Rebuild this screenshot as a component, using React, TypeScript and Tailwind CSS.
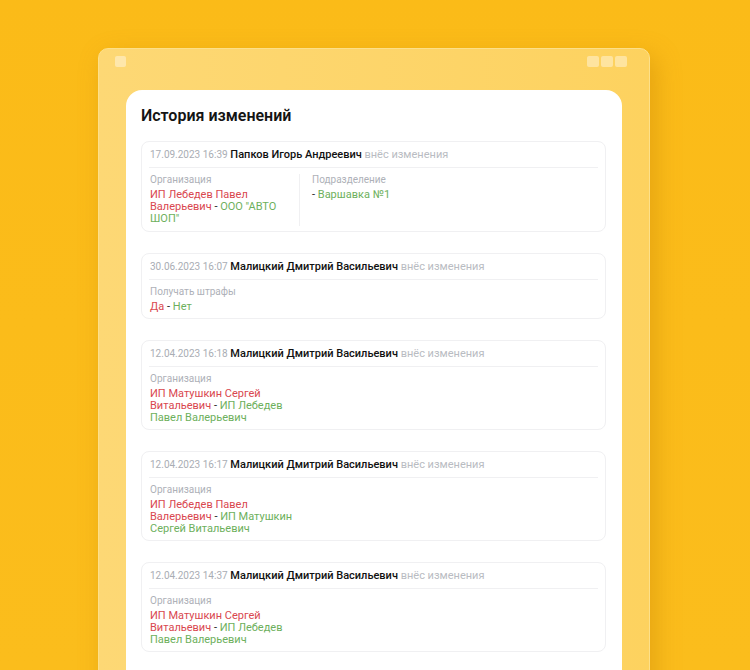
type Change = {
  label: string;
  from: string;
  to: string;
};

type Entry = {
  date: string;
  author: string;
  changes: Change[];
};

const entries: Entry[] = [
  {
    date: "17.09.2023 16:39",
    author: "Папков Игорь Андреевич",
    changes: [
      { label: "Организация", from: "ИП Лебедев Павел Валерьевич", to: 'ООО "АВТО ШОП"' },
      { label: "Подразделение", from: "", to: "Варшавка №1" },
    ],
  },
  {
    date: "30.06.2023 16:07",
    author: "Малицкий Дмитрий Васильевич",
    changes: [{ label: "Получать штрафы", from: "Да", to: "Нет" }],
  },
  {
    date: "12.04.2023 16:18",
    author: "Малицкий Дмитрий Васильевич",
    changes: [
      { label: "Организация", from: "ИП Матушкин Сергей Витальевич", to: "ИП Лебедев Павел Валерьевич" },
    ],
  },
  {
    date: "12.04.2023 16:17",
    author: "Малицкий Дмитрий Васильевич",
    changes: [
      { label: "Организация", from: "ИП Лебедев Павел Валерьевич", to: "ИП Матушкин Сергей Витальевич" },
    ],
  },
  {
    date: "12.04.2023 14:37",
    author: "Малицкий Дмитрий Васильевич",
    changes: [
      { label: "Организация", from: "ИП Матушкин Сергей Витальевич", to: "ИП Лебедев Павел Валерьевич" },
    ],
  },
];

export default function App() {
  return (
    <div
      className="h-[670px] w-[750px] overflow-hidden bg-gradient-to-b from-[#fbbb18] to-[#fbbd1c] pl-[98px] pt-[48px]"
      style={{ fontFamily: "Roboto, 'Liberation Sans', sans-serif" }}
    >
      <div className="h-[700px] w-[552px] rounded-[10px] border border-[#fde08a] bg-gradient-to-r from-[#fdd875] to-[#fdd25f] px-[27px] pt-[7px] shadow-[6px_8px_24px_rgba(190,120,0,0.35)]">
        <div className="-mx-[11px] flex items-center justify-between">
          <div className="h-[11px] w-[11px] rounded-[2px] bg-white/40" />
          <div className="mr-[6px] flex gap-[2px]">
            <div className="h-[11px] w-[12px] rounded-[2px] bg-white/40" />
            <div className="h-[11px] w-[12px] rounded-[2px] bg-white/40" />
            <div className="h-[11px] w-[12px] rounded-[2px] bg-white/40" />
          </div>
        </div>

        <div className="mt-[23px] h-[620px] rounded-t-[16px] bg-white pl-[15px] pr-[16px] pt-[15px]">
          <h1 className="text-[16px] font-semibold leading-[22px] text-[#141414]">История изменений</h1>

          <div className="mt-[14px] flex flex-col gap-[21px]">
            {entries.map((entry) => (
              <EntryCard key={entry.date} entry={entry} />
            ))}
          </div>
        </div>
      </div>
    </div>
  );
}

function EntryCard({ entry }: { entry: Entry }) {
  return (
    <div className="rounded-[8px] border border-[#f0f0f2] pb-[5px] text-[11px] leading-[12px]">
      <div className="mx-[7px] border-b border-[#f0f0f2] px-px pb-[5px] pt-[6px] leading-[14px]">
        <span className="text-[10px] text-[#a9adb4]">{entry.date}</span>{" "}
        <span className="font-medium text-[#111]">{entry.author}</span>{" "}
        <span className="text-[#b9bcc2]">внёс изменения</span>
      </div>

      <div className="flex px-[8px] pt-[6px]">
        {entry.changes.map((change, i) => (
          <div
            key={change.label}
            className={
              i < entry.changes.length - 1
                ? "w-[150px] border-r border-[#f0f0f2] pb-[1px] pr-[4px]"
                : i > 0
                  ? "w-[150px] pl-[12px]"
                  : "w-[150px] pr-[4px]"
            }
          >
            <div className="text-[10px] leading-[12px] text-[#aeb1b8]">{change.label}</div>
            <div className="mt-[3px]">
              {change.from && <span className="text-[#d9474f]">{change.from}</span>}
              {change.from ? " " : ""}
              <span className="text-[#222]">-</span>{" "}
              <span className="text-[#6db05c]">{change.to}</span>
            </div>
          </div>
        ))}
      </div>
    </div>
  );
}
